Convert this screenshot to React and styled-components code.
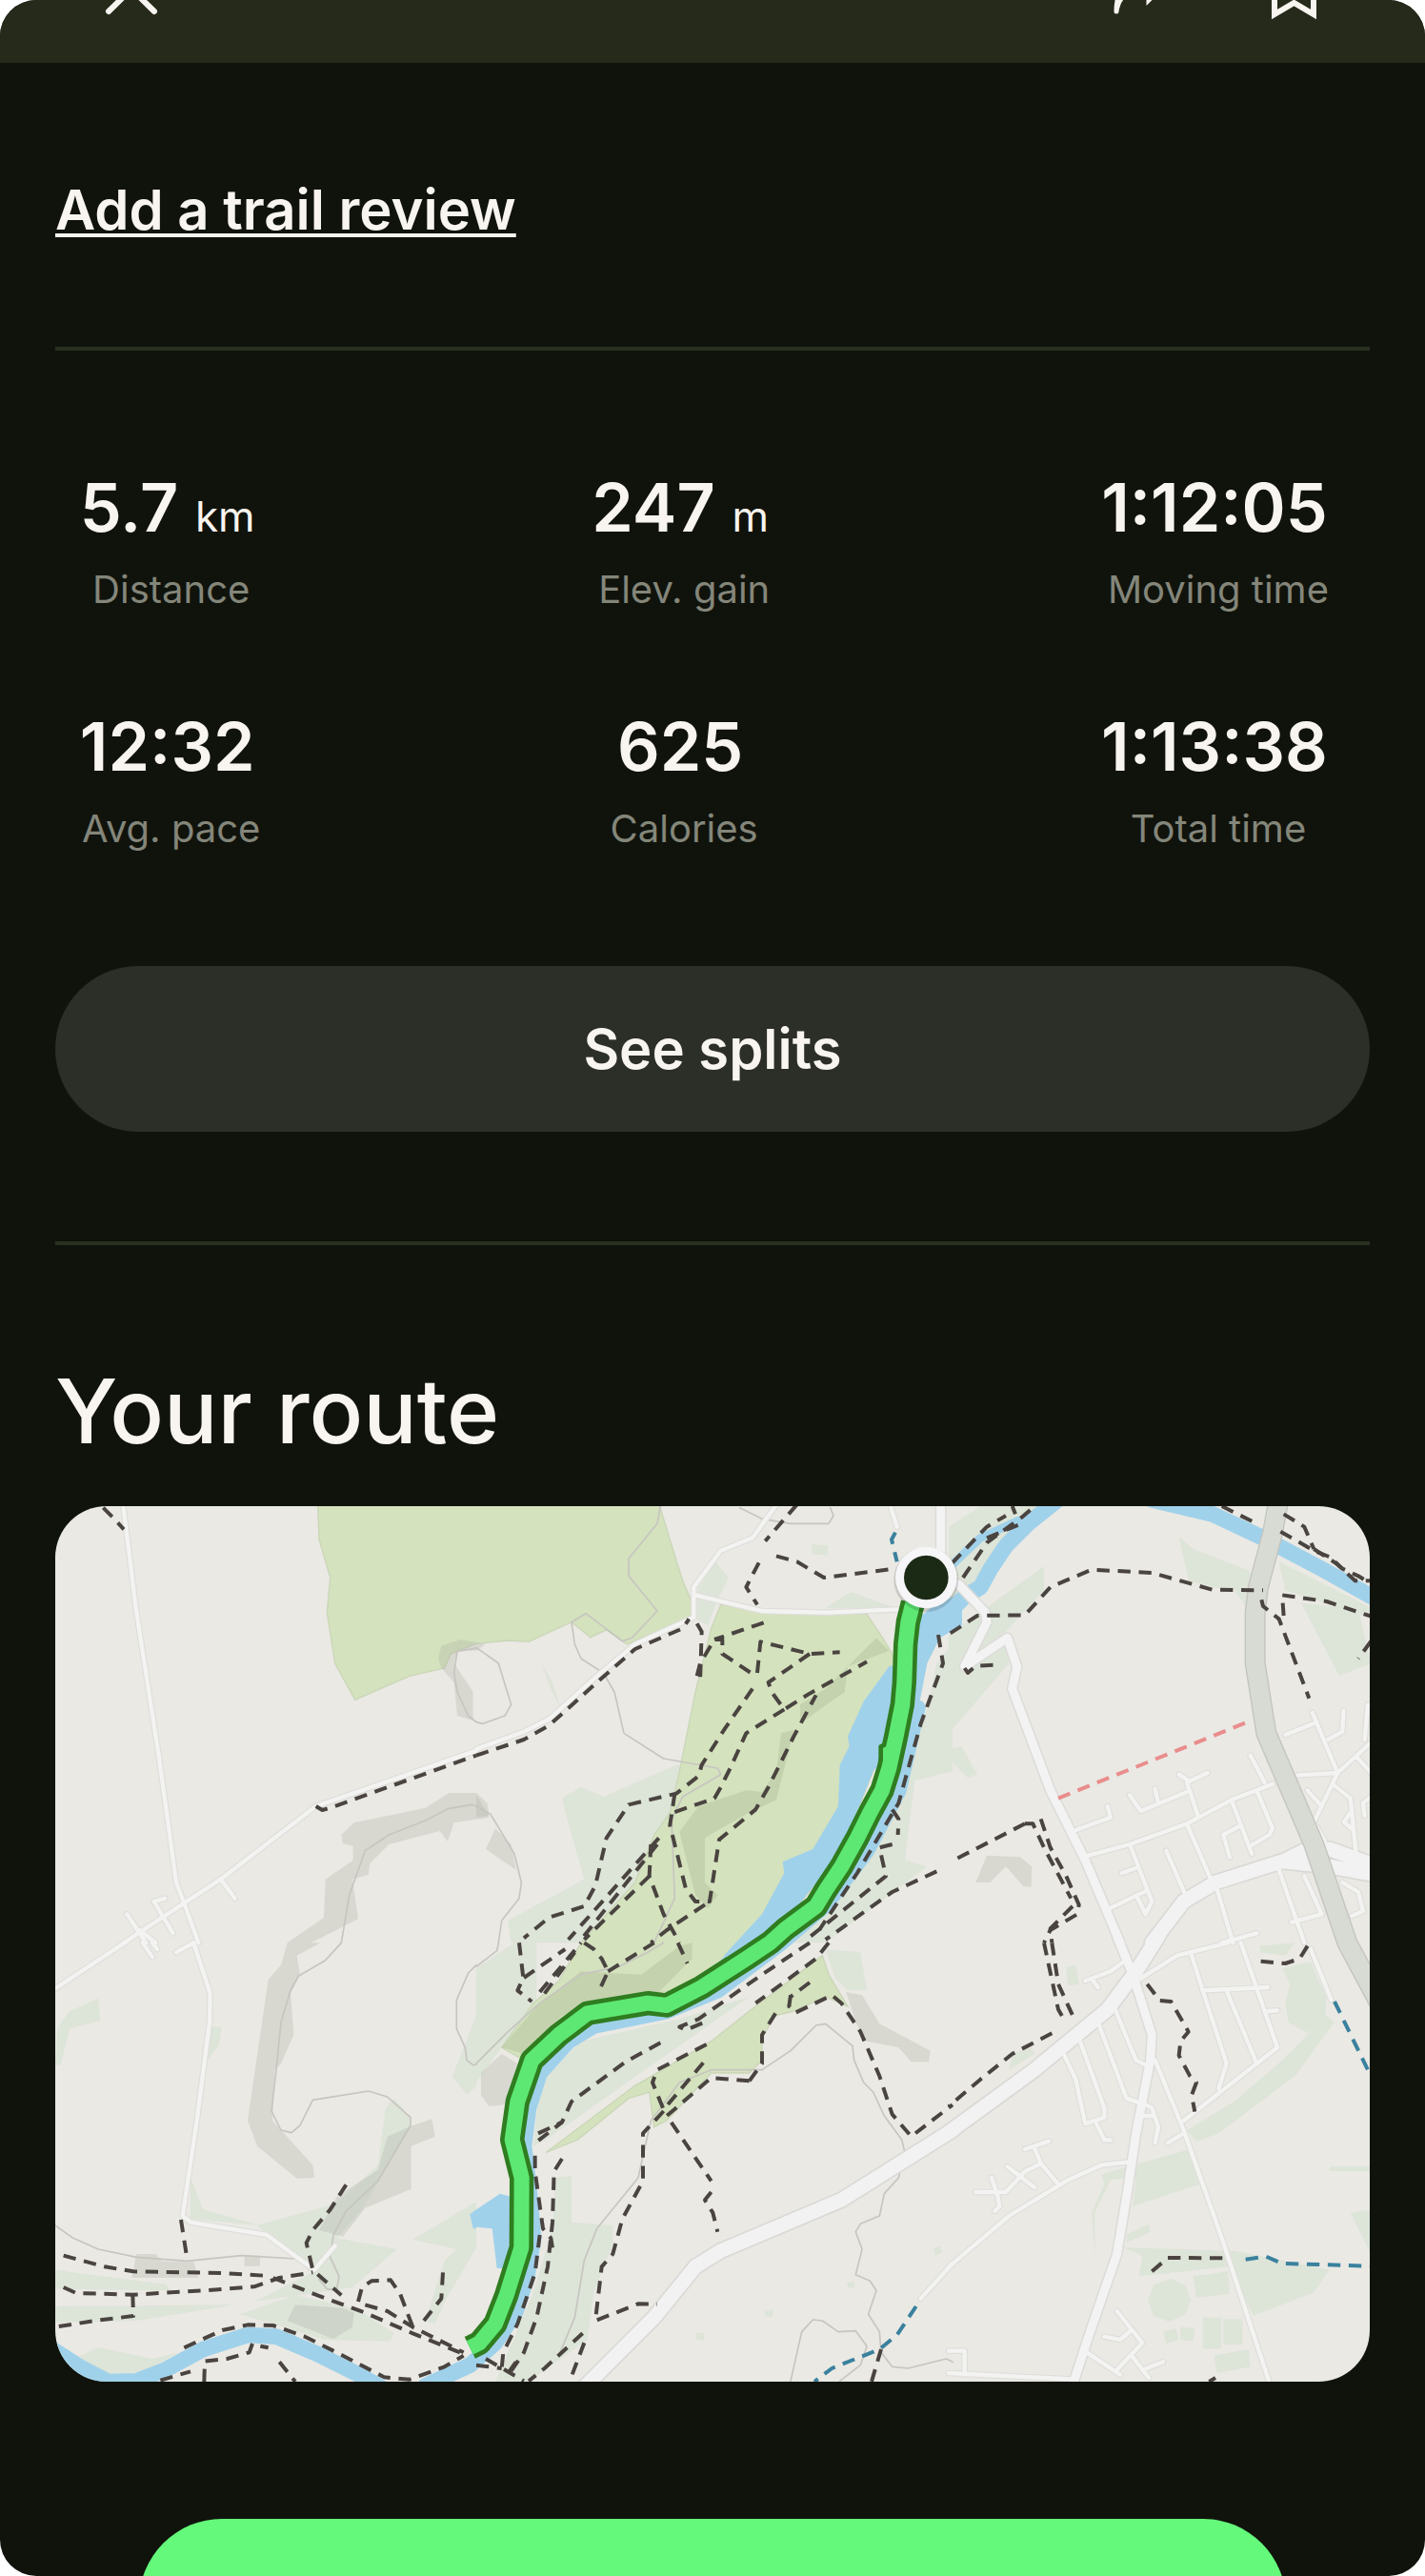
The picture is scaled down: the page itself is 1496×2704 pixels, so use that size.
import React from 'react'
import styled, { createGlobalStyle } from 'styled-components'

const palette = {
  page: '#10130c',
  header: '#252a1a',
  line: '#283020',
  text: '#f8f4ef',
  muted: '#84867a',
  secondary: '#2c2e28',
  accent: '#64f97b'
}

const GlobalStyle = createGlobalStyle`
  *, *::before, *::after {
    box-sizing: border-box;
  }
  body {
    margin: 0;
    background: #ffffff;
    font-family: Inter, "Liberation Sans", sans-serif;
  }
`

const Screen = styled.div`
  height: 100vh;
  overflow: hidden;
  border-radius: 38px;
  background: ${palette.page};
  color: ${palette.text};
`

const Header = styled.header`
  display: flex;
  align-items: flex-end;
  justify-content: space-between;
  height: 66px;
  padding: 0 102px 40px;
  overflow: hidden;
  background: ${palette.header};
`

const HeaderActions = styled.div`
  display: flex;
  gap: 90px;
`

const IconButton = styled.button`
  display: block;
  padding: 0;
  border: 0;
  background: none;
  color: inherit;
  cursor: pointer;
  > svg {
    display: block;
    width: 72px;
    height: 72px;
    fill: none;
    stroke: currentColor;
    stroke-width: ${props => props.$stroke || 6};
    stroke-linecap: round;
  }
`

const Content = styled.main`
  display: flex;
  flex-direction: column;
  padding: 0 58px;
`

const ReviewLink = styled.a`
  align-self: flex-start;
  margin: 118px 0 108px;
  font-size: 58px;
  line-height: 72px;
  font-weight: 600;
  color: inherit;
  text-decoration: underline;
  text-decoration-thickness: 4px;
  text-underline-offset: 4px;
  text-decoration-skip-ink: none;
`

const Divider = styled.hr`
  width: 100%;
  height: 4px;
  margin: 0;
  border: 0;
  background: ${palette.line};
`

const Stats = styled.dl`
  display: grid;
  grid-template-columns: repeat(3, auto);
  justify-content: space-between;
  row-gap: 79px;
  margin: 0;
  padding: 115px 43px 108px 20px;
`

const Stat = styled.div`
  display: flex;
  flex-direction: column-reverse;
  align-items: center;
`

const StatLabel = styled.dt`
  padding-left: 8px;
  font-size: 40px;
  line-height: 72px;
  color: ${palette.muted};
`

const StatValue = styled.dd`
  margin: 0;
  font-size: 70px;
  line-height: 100px;
  font-weight: 600;
`

const Unit = styled.span`
  font-size: 44px;
  line-height: 1;
  font-weight: 400;
`

const SplitsButton = styled.button`
  height: 174px;
  margin-bottom: 115px;
  border: 0;
  border-radius: 87px;
  background: ${palette.secondary};
  color: inherit;
  font-family: inherit;
  font-size: 58px;
  font-weight: 600;
  cursor: pointer;
`

const SectionTitle = styled.h2`
  margin: 118px 0 44px;
  font-size: 94px;
  line-height: 112px;
  font-weight: 500;
`

const MapCard = styled.div`
  border-radius: 54px;
  overflow: hidden;
  background: #eae9e4;
  > svg {
    display: block;
    width: 100%;
    height: auto;
  }
`

const PrimaryButton = styled.button`
  height: 174px;
  margin: 144px 88px 0;
  border: 0;
  border-radius: 87px;
  background: ${palette.accent};
  cursor: pointer;
`

// Map geometry, one entry per tile. Points are in tile units.
const tiles = [
  {
    id: 'nw', x: 0, y: 0,
    park: [
      '1000,40 1005,170 1040,290 1030,400 1055,560 1118,675 1290,600 1400,575 1420,530 1500,498 1600,488 1665,492 1800,430 1860,478 1910,455 1975,500 2020,480 2180,415 2180,370 2150,300 2070,40'
    ],
    slope: [
      '1075,1100 1115,1062 1340,1015 1415,968 1500,968 1535,1000 1540,1045 1430,1062 1410,1120 1385,1088 1225,1130 1165,1190 1160,1225 1110,1240 1128,1365 980,1440 905,1440 1020,1360 1025,1240 1112,1180 1112,1135 1080,1128',
      '1380,545 1390,505 1450,485 1530,500 1500,520 1440,520 1430,560 1490,650 1490,740 1440,725 1430,620 1390,575'
    ],
    contour: [
      '1075,1440 1100,1290 1150,1150 1225,1100 1340,1055 1410,1018 1485,1005 1500,1010',
      '1500,512 1440,522 1430,590 1440,650 1475,725 1500,745'
    ],
    lane: [
      '385,40 430,400 500,850 555,1250 580,1315 625,1440',
      '390,1440 580,1315 695,1240 995,1010 1500,835',
      '695,1240 740,1300', '400,1350 440,1410 460,1440', '520,1300 485,1310 515,1360 545,1410', '440,1400 490,1440'
    ],
    path: ['325,70 355,100 390,138', '995,1010 1015,1022 1040,1015 1500,850']
  },
  {
    id: 'n', x: 1500, y: 0,
    wood: [
      '270,985 330,950 400,980 630,880 770,885 620,1240 560,1440 110,1440 100,1370 340,1240 300,1100',
      '690,340 750,235 795,290 760,360 730,440 680,415',
      '1180,335 1330,390 1100,385',
      '1450,560 1500,500 1500,900 1380,930 1350,1180 1420,1200 1100,1440 1000,1440 1300,1030 1420,700',
      '1055,185 1110,190 1105,220 1058,215',
      '205,560 240,620 265,700 235,640'
    ],
    park: [
      '770,375 900,400 1230,405 1280,480 1310,530 1330,600 1250,900 1150,1150 1000,1340 850,1490 700,1580 550,1600 350,1640 200,1760 150,1810 80,1770 180,1630 260,1560 330,1440 500,1250 560,1100 610,1030 640,900 690,650 740,450'
    ],
    parkSlope: [
      '1260,480 1300,520 1170,570 1160,650 1020,750 1020,690 1100,640',
      '960,780 1000,770 980,850 945,990 860,1030 770,1080 720,1110 720,1250 760,1290 730,1330 690,1290 640,1090 700,1010 850,960 900,965 945,900'
    ],
    slope: ['30,1145 60,1080 110,1130 125,1210', '0,975 40,1040 0,1045'],
    contour: [
      '0,510 70,560 110,690 90,725 20,750 0,745',
      '0,1010 45,1035 120,1160 142,1250 135,1300 80,1370 70,1440',
      '580,65 570,120 480,230 480,285 570,395 490,480 460,490 345,403 300,430 310,500 330,545 400,590 435,650 465,780 590,860 760,890 770,910 650,980 615,1050 625,1300 560,1440',
      '830,70 900,105 990,120 1110,120 1125,95 1115,70'
    ],
    lake: [
      '780,1480 900,1350 970,1220 965,1185 1060,1145 1140,1010 1145,880 1175,820 1170,790 1220,680 1300,570 1330,560 1330,700 1300,850 1250,900 1150,1150 1000,1340 880,1470',
      '1390,420 1450,370 1530,340 1530,440 1460,480 1420,560 1385,740 1330,960 1300,960 1370,700'
    ],
    lane: [
      '960,40 870,165 770,205 685,320 685,415 500,500 380,600 230,735 150,775 0,830',
      '690,345 900,395 1100,400 1330,390', '1300,50 1325,130'
    ],
    street: ['1463,40 1463,230'],
    path: [
      '0,850 150,800 230,755 380,620 500,515 650,450 670,420',
      '695,435 710,460 705,620', '695,600 705,560 750,485 775,485 775,530 880,600', '905,432 750,485',
      '885,590 895,492 1050,530 1145,525', '1050,530 920,620 930,650 970,705 1050,655 1230,555',
      '970,705 850,780 800,890 770,950 750,985 620,1030',
      '870,640 780,770 710,880 700,915 630,970 480,1005 410,1110 375,1260 340,1325 230,1360 150,1425',
      '625,970 610,1070 630,1150 660,1270 690,1310 735,1310 765,1115 880,1020 920,950 1000,790 1070,660',
      '575,1110 290,1430', '570,1130 330,1430', '545,1230 340,1430',
      '550,1130 545,1230 590,1350 640,1440', '720,1320 600,1400 550,1440',
      '1010,60 910,175', '945,222 1010,240 1095,290 1320,262', '890,243 850,320 885,375',
      '1455,470 1470,560 1400,750 1330,1000 1200,1220 1080,1400',
      '1310,1020 1330,1050 1328,1100', '1310,1130 1270,1140 1290,1230 1040,1430', '1450,1215 1310,1280 1100,1430'
    ],
    cycle: ['1320,148 1308,170 1325,240']
  },
  {
    id: 'ne', x: 2988, y: 0,
    wood: [
      '0,130 100,65 280,65 170,190 0,400',
      '0,470 300,255 300,330 170,470 190,560 0,780',
      '725,160 770,200 950,270 950,400 900,330 830,320 755,300',
      '1110,370 1290,390 1330,560 1230,600', '1040,240 1340,390 1340,420 1060,330',
      '0,830 40,820 90,910 60,920 0,860'
    ],
    slope: ['120,1165 225,1170 262,1200 260,1265 235,1262 180,1200 130,1250 85,1250'],
    river: [
      '-20,420 50,350 100,320 130,265 180,190 250,120 350,40',
      '640,45 830,90 990,165 1170,260 1350,360'
    ],
    stream: ['0,260 100,165 220,110'],
    lane: [
      '400,1085 510,1045 500,1010', '570,975 605,1025 750,965', '650,955 660,1000', '785,1040 750,935 815,905',
      '725,910 755,930', '440,1165 570,1130 750,1065 890,990 1020,940', '950,850 995,935',
      '970,960 1020,1080 1010,1100 950,1135', '890,990 955,1160', '920,1070 865,1100 885,1170', '750,1065 830,1250',
      '685,1150 750,1300', '570,1130 640,1310 620,1350 590,1290', '510,1330 625,1275', '545,1220 590,1205',
      '845,1270 895,1440', '1040,1210 1120,1440', '1120,1230 1175,1350 1080,1375', '1100,912 1225,905 1340,800',
      '1060,785 1160,745', '1145,715 1225,905 1150,1060 1185,1120', '1195,800 1240,775 1243,710',
      '1215,945 1265,985 1285,1180', '1130,960 1175,1010', '1285,855 1340,915', '1320,690 1310,800',
      '1330,980 1305,1000 1310,1040', '1265,1030 1245,1060 1275,1085', '860,1440 970,1410',
      '1240,1250 1290,1280 1305,1340 1270,1355'
    ],
    street: ['30,310 115,400 120,430 50,570 185,480 215,570 200,640 320,960 430,1180 540,1440'],
    road: ['640,1440 740,1310 840,1250 1060,1180 1120,1150 1200,1145 1340,1195', '1060,1185 1200,1200 1340,1225'],
    trunk: ['1040,40 1020,150 975,320 965,400 965,560 1000,780 1060,920 1150,1130 1255,1440 1400,1710'],
    path: [
      '5,465 90,410 240,408 320,320 450,265 640,275 830,328 990,330', '985,360 990,380 1040,420 1135,670',
      '1055,410 1050,345 1190,365 1330,412', '1330,490 1290,545', '1055,90 1120,130 1150,200',
      '1045,145 1150,205 1200,225 1240,262 1290,285 1340,315', '1150,200 1220,245 1280,300 1340,300',
      '860,65 970,120', '10,245 120,130 180,95', '45,290 120,180 230,100 265,70', '120,165 230,120', '200,65 210,90',
      '240,1065 15,1180', '240,1065 265,1065 300,1140 385,1300',
      '290,1050 320,1140 370,1230 410,1320 405,1350 320,1400 300,1440', '390,1325 320,1395 325,1440',
      '50,575 60,590 85,568 140,565'
    ],
    restricted: ['345,985 940,745']
  },
  {
    id: 'sw', x: 0, y: 1440,
    wood: [
      '174,1030 520,1075 540,1095 174,1090', '174,1145 740,1140 430,1190 174,1195',
      '810,890 1060,820 1190,700 1215,520 1240,490 1293,550 1293,580 1140,840 1060,930 1250,965 1110,1085 800,1130 980,1040',
      '600,740 640,840 820,890 600,870', '1300,935 1500,815 1500,960 1400,1130 1370,1200 1340,1190 1400,1000 1440,965',
      '180,270 220,215 310,175 315,245 220,270 190,385 174,385',
      '755,1170 930,1110 1120,1150 1240,1230 1230,1255 1020,1250 860,1200', '660,265 698,265 690,320 655,370',
      '1425,420 1500,230 1500,450 1470,480', '210,1320 310,1275 480,1310 560,1290 460,1350 330,1360'
    ],
    slope: [
      '905,0 980,0 1010,0 935,40 945,100 915,160 925,290 885,380 865,400 858,560 985,700 990,740 935,742 810,640 780,560 845,115 885,70',
      '930,1140 1080,1150 1115,1165 1110,1210 1050,1248 905,1190',
      '1005,905 1060,800 1190,715 1220,610 1300,575 1360,555 1370,610 1295,640 1295,775 1150,835 1080,925',
      '430,980 490,980 510,1003 610,1005 625,1055 415,1055', '770,985 820,985 818,1018 770,1018'
    ],
    contour: [
      '1075,0 1025,55 940,105 915,150 885,250 870,400 855,530 885,590 918,598 945,575 985,495 1160,467 1220,485 1293,550 1293,575 1190,750 1090,845 1050,920 1040,990 1068,1050 1060,1095 1030,1090 1005,1060',
      '174,890 230,930 310,965 430,990 590,1002 760,985 930,995 985,1030',
      '1500,70 1475,95 1438,180 1438,270 1465,330 1470,370 1490,385 1500,383'
    ],
    lake: ['1500,840 1480,855 1490,900 1500,900'],
    river: ['150,1270 250,1335 340,1382 430,1380 520,1345 640,1280 780,1235 870,1240 1000,1295 1130,1360 1200,1400'],
    lane: [
      '150,160 400,-5', '610,0 662,160 660,250 620,560 575,860 600,880 840,920 990,1030 1055,955', '555,30 610,0',
      '450,0 480,45', '480,0 495,20'
    ],
    path: [
      '570,872 590,1000', '200,985 330,1020 420,1035 700,1040 830,1048',
      '200,1085 240,1103 420,1108 640,1095 800,1083 880,1055 985,1038', '418,1108 420,1175 300,1190 174,1210',
      '1090,762 1040,840 985,905 965,945 985,1030 1075,1110', '860,1055 1000,1110 1150,1165 1300,1230 1460,1295',
      '1150,1140 1220,1160 1300,1210 1460,1290', '1128,1130 1140,1085 1170,1065 1230,1062 1260,1105 1300,1210',
      '1395,1038 1390,1120 1335,1190',
      '580,1275 700,1220 780,1203 860,1205 960,1240 1080,1300 1210,1368 1290,1375 1400,1335 1460,1300',
      '505,1378 600,1350', '643,1382 645,1318 715,1310 785,1290 795,1262', '820,1270 845,1275', '880,1320 930,1382'
    ]
  },
  {
    id: 's', x: 1500, y: 1440,
    wood: [
      '250,740 300,735 300,880 430,890 430,950 370,1100 350,1250 160,1385 60,1385 180,1100 240,900',
      '200,440 330,310 640,240 860,170 560,380 220,620 180,640', '0,80 120,0 190,0 190,200 80,330 0,440',
      '1100,20 1210,30 1230,150 1170,150 1130,110', '1440,965 1460,955 1468,975 1445,985',
      '1168,1070 1190,1065 1192,1085 1170,1088', '908,1158 935,1155 932,1178 910,1176', '692,1230 718,1228 716,1252 694,1250'
    ],
    park: [
      '220,660 500,450 740,310 860,215 1090,40 1110,100 1170,200 1100,170 1000,215 940,230 900,300 900,370 860,410 740,410 600,560 560,580 545,470 480,490 320,620'
    ],
    parkSlope: ['190,200 330,90 520,100 640,10 680,0 680,50 570,160 510,160 350,190 270,230 150,350 80,330'],
    slope: [
      '15,410 80,350 130,380 90,510 40,515 15,480',
      '1165,155 1215,165 1270,255 1430,340 1425,375 1370,375 1330,330 1230,310 1195,250'
    ],
    contour: [
      '0,380 100,280 200,190 330,100 450,75 540,30 590,0',
      '900,400 990,340 1070,260 1100,255 1185,325 1190,370 1220,440 1250,470 1285,545 1340,620 1350,660 1330,740 1285,790 1270,860 1210,885 1195,910 1215,965 1195,1045 1240,1065 1260,1095 1235,1170 1270,1225 1275,1290 1310,1335 1360,1340 1480,1310 1500,1320',
      '990,1380 1025,1225 1060,1187 1090,1190 1140,1225 1195,1222 1230,1270 1210,1330 1145,1380',
      '900,400 740,400 640,440 580,520 550,560 510,740 380,900 340,1000 310,1180 260,1300', '0,75 65,25 70,0'
    ],
    lake: ['0,840 75,790 110,800 110,1025 65,1025 50,900 0,895', '700,130 820,0 930,0 760,150'],
    river: [
      '-160,1395 -20,1330 60,1260 125,1160 160,1050 180,930 165,760 150,640 165,520 200,410 290,310 370,262 600,215 760,150 960,0 1100,-120 1230,-290 1330,-480 1390,-740'
    ],
    lane: ['1400,1120 1500,1010'],
    road: ['330,1410 560,1180 690,1020 770,970 1150,810 1500,590'],
    path: [
      '135,0 148,110 130,150 175,185', '150,110 280,20', '200,155 330,0', '215,160 310,30',
      '340,0 370,20 395,50 415,90 385,155', '415,90 560,0', '635,0 665,65', '1050,0 900,100 700,240 640,265 660,275 730,245',
      '1110,0 1070,50 880,190', '580,315 470,375 300,500 270,565 180,635', '195,600 270,565',
      '185,670 185,720 210,900 235,930 240,960', '270,680 245,720 240,880 225,1020 190,1180 150,1290 95,1370',
      '200,920 185,1040 130,1200 85,1290 80,1340', '725,320 570,400 555,440 590,525 730,360',
      '860,435 740,425 600,545 740,750', '740,785 720,810 745,850 760,910', '860,435 900,380 900,290 950,210',
      '990,165 985,200 1005,220 1120,165 1150,190 1210,280 1270,420 1310,540 1370,610 1500,510', '1050,125 990,170',
      '590,530 525,600 525,750 460,870 430,980 395,1020 375,1190 510,1137 570,1138', '340,1260 300,1365',
      '335,1230 215,1340 165,1380', '0,1330 80,1340', '30,1310 150,1380', '125,1320 90,1370', '1275,1280 1245,1382'
    ],
    cycle: ['1385,1145 1325,1235 1270,1280 1120,1340 1065,1382']
  },
  {
    id: 'se', x: 2988, y: 1440,
    wood: [
      '480,730 580,700 760,650 790,760 580,830 590,740 510,745 460,850 460,980 450,850 490,760',
      '750,590 900,500 1050,370 1190,230 1215,250 1090,420 850,600 780,625',
      '1050,80 1140,60 1160,110 1190,170 1185,240 1130,285 1070,250 1060,190 1075,130', '980,10 1090,0 1060,40 980,30',
      '550,960 900,970 1200,1030 1150,1100 960,1175 880,1020 600,1050 610,985', '1265,850 1330,840 1330,980',
      '770,1050 880,1035 885,1105 780,1118', '700,1058 745,1078 763,1125 745,1170 695,1193 645,1175 628,1125 645,1078',
      '800,1180 858,1180 858,1278 800,1278', '865,1185 925,1185 925,1265 865,1265', '835,1300 945,1280 950,1335 845,1355',
      '675,1225 715,1215 725,1250 685,1262', '730,1210 775,1215 770,1255 730,1250', '560,920 630,885 635,910 560,945',
      '1200,705 1330,705 1330,720 1200,718', '370,75 400,70 410,130 375,135', '200,350 260,330 270,350 190,400'
    ],
    lane: [
      '600,115 720,40 880,0', '650,370 740,590 860,930 1015,1400', '740,560 1035,330 920,0', '765,40 800,150 875,380 850,460',
      '800,150 1005,140', '875,150 970,380', '1005,215 1035,213', '1140,20 1205,180', '690,630 740,600',
      '430,120 510,90 550,60', '455,120 470,140', '360,345 400,430 430,570 490,550 490,520 410,300',
      '465,570 490,620 510,622', '470,250 560,490 620,510', '520,200 590,370 620,385', '600,500 640,520 660,580 650,630',
      '610,545 645,545', '0,1020 190,860 370,750 480,700 570,690', '85,785 180,785 240,720 290,695 345,760',
      '290,695 270,645', '240,650 315,625', '135,740 155,800 160,830 145,845', '185,705 270,770',
      '0,1285 50,1285 50,1360', '0,1355 400,1375', '530,1160 610,1260 525,1350', '490,1240 540,1250 575,1220',
      '435,1290 540,1360', '580,1305 630,1370', '610,1345 675,1320'
    ],
    street: ['530,-20 580,100 640,290 635,370 590,600 560,800 530,980 440,1240 385,1410'],
    road: ['0,597 270,400 500,210 590,90 660,-20'],
    path: [
      '300,0 345,210 365,245', '325,0 345,130 400,250', '325,285 200,350 100,430 0,515',
      '625,130 665,182 700,185 755,280 730,310 725,355 760,420 780,440 765,480 775,532',
      '1130,10 1105,50 1060,65 980,58', '640,1035 690,992 870,993', '820,1382 840,1370'
    ],
    cycle: ['1215,185 1325,410', '935,997 1000,988 1050,1010 1330,1018']
  }
]

// Drawn bottom to top
const layers = [
  { kind: 'wood', fill: '#dde4d8' },
  { kind: 'park', fill: '#d4e2be', stroke: '#cbd6b8', width: 4 },
  { kind: 'slope', fill: '#a9ada3', opacity: 0.28 },
  { kind: 'parkSlope', fill: '#9da884', opacity: 0.28 },
  { kind: 'contour', stroke: '#c6c5c0', width: 5 },
  { kind: 'lake', fill: '#a0d1ea' },
  { kind: 'river', stroke: '#a0d1ea', width: 50 },
  { kind: 'stream', stroke: '#a0d1ea', width: 26 },
  { kind: 'lane', stroke: '#dfdedb', width: 20 },
  { kind: 'street', stroke: '#dcdbd8', width: 36 },
  { kind: 'road', stroke: '#dad9d6', width: 54 },
  { kind: 'lane', stroke: '#f3f3f2', width: 13 },
  { kind: 'street', stroke: '#f3f3f3', width: 27 },
  { kind: 'road', stroke: '#f2f2f2', width: 44 },
  { kind: 'trunk', stroke: '#c3c4bf', width: 66 },
  { kind: 'trunk', stroke: '#d8dad4', width: 58 },
  { kind: 'path', stroke: '#4a4440', width: 12, dash: '40 26' },
  { kind: 'cycle', stroke: '#3a819e', width: 12, dash: '40 26' },
  { kind: 'restricted', stroke: '#e98d8c', width: 12, dash: '40 26' }
]

const track = '2875,370 2860,430 2852,500 2848,620 2842,690 2822,790 2800,890 2778,960 2740,1030 2700,1110 2650,1200 2600,1275 2570,1325 2475,1395 2425,1440 2350,1490 2210,1580 2100,1637 2040,1630 1850,1662 1760,1730 1675,1810 1630,1940 1613,2060 1643,2180 1642,2400 1595,2550 1560,2640 1510,2700 1480,2715'

const MapShape = ({ layer, points }) => {
  if (layer.fill) {
    return <polygon points={points} fill={layer.fill} opacity={layer.opacity}
                    stroke={layer.stroke} strokeWidth={layer.width} />
  }
  return <polyline points={points} fill="none" stroke={layer.stroke} strokeWidth={layer.width}
                   strokeDasharray={layer.dash} strokeLinejoin="round"
                   strokeLinecap={layer.dash ? 'butt' : 'round'} />
}

const RouteMap = () => (
  <MapCard>
    <svg viewBox="174 65 4140 2757" role="img" aria-label="Map of your route">
      {layers.map((layer, index) => (
        <g key={index}>
          {tiles.map(tile => (
            <g key={tile.id} transform={`translate(${tile.x} ${tile.y})`}>
              {(tile[layer.kind] || []).map(points => <MapShape key={points} layer={layer} points={points} />)}
            </g>
          ))}
        </g>
      ))}
      <g fill="none" strokeLinejoin="round">
        <polyline points={track} stroke="#2f7d20" strokeWidth="76" />
        <path d="M2800 810l-26 12v60l26-20" fill="#5de873" stroke="#2f7d20" strokeWidth="14" />
        <polyline points={track} stroke="#5de873" strokeWidth="48" />
      </g>
      <circle cx="2917" cy="296" r="102" fill="#000000" opacity="0.14" />
      <circle cx="2917" cy="290" r="97" fill="#f6f6f8" />
      <circle cx="2917" cy="290" r="70" fill="#1b2a15" />
    </svg>
  </MapCard>
)

const stats = [
  { label: 'Distance', value: '5.7', unit: 'km' },
  { label: 'Elev. gain', value: '247', unit: 'm' },
  { label: 'Moving time', value: '1:12:05' },
  { label: 'Avg. pace', value: '12:32' },
  { label: 'Calories', value: '625' },
  { label: 'Total time', value: '1:13:38' }
]

const App = () => (
  <Screen>
    <GlobalStyle />
    <Header>
      <IconButton type="button" aria-label="Close">
        <svg viewBox="0 0 72 72"><path d="M12 11l48 47M60 11L12 58" /></svg>
      </IconButton>
      <HeaderActions>
        <IconButton type="button" aria-label="Share" $stroke={5}>
          <svg viewBox="0 0 72 72"><path d="M12 58C14 44 22 34 46 34V46L66 26 46 8V20C22 20 12 36 12 58" /></svg>
        </IconButton>
        <IconButton type="button" aria-label="Save">
          <svg viewBox="0 0 72 72"><path d="M16 8H57V61L36.5 49 16 61Z" /></svg>
        </IconButton>
      </HeaderActions>
    </Header>
    <Content>
      <ReviewLink href="#review">Add a trail review</ReviewLink>
      <Divider />
      <Stats>
        {stats.map(({ label, value, unit }) => (
          <Stat key={label}>
            <StatLabel>{label}</StatLabel>
            <StatValue>{value}{unit && <> <Unit>{unit}</Unit></>}</StatValue>
          </Stat>
        ))}
      </Stats>
      <SplitsButton type="button">See splits</SplitsButton>
      <Divider />
      <SectionTitle>Your route</SectionTitle>
      <RouteMap />
      <PrimaryButton type="button" aria-label="Continue" />
    </Content>
  </Screen>
)

export default App
